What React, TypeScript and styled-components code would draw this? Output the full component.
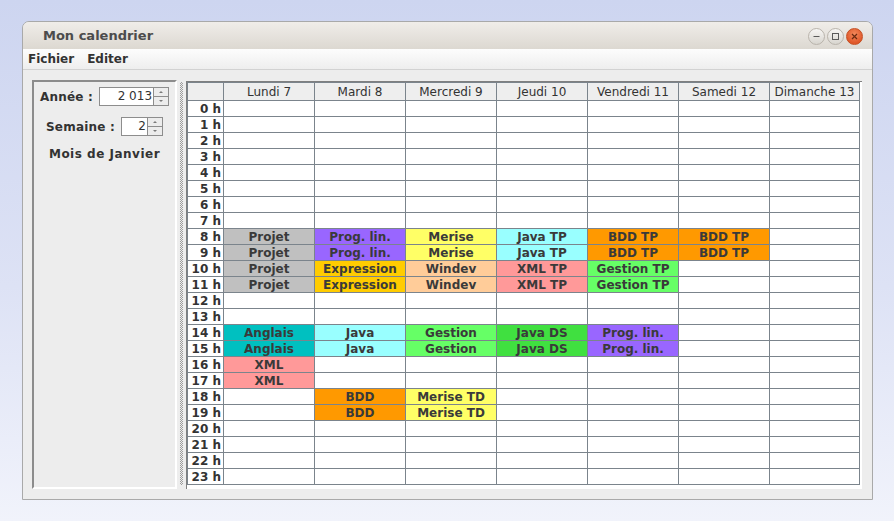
import React from "react";
import styled, { createGlobalStyle } from "styled-components";

const GlobalStyle = createGlobalStyle`
  html, body {
    margin: 0;
    padding: 0;
  }
  body {
    font-family: "DejaVu Sans", "Liberation Sans", sans-serif;
    color: #333;
  }
  * {
    box-sizing: border-box;
  }
`;

const Desktop = styled.div`
  min-height: 521px;
  padding: 21px 0 0 22px;
  background: linear-gradient(to bottom, #cdd5f0 0%, #dde2f5 55%, #f1f3fb 100%);
`;

const Window = styled.div`
  width: 851px;
  height: 479px;
  display: flex;
  flex-direction: column;
  border: 1px solid #a9a9a9;
  border-radius: 7px 7px 0 0;
  background: #ededed;
  overflow: hidden;
`;

const TitleBar = styled.div`
  height: 27px;
  display: flex;
  align-items: center;
  padding: 0 9px 0 20px;
  background: linear-gradient(to bottom, #f0ede9, #dcd8d1);
`;

const Title = styled.div`
  font-weight: bold;
  font-size: 13px;
  color: #4c4c4c;
  margin-top: -1px;
`;

const Controls = styled.div`
  margin-left: auto;
  display: flex;
  gap: 2px;
  padding-top: 1px;
`;

const ControlButton = styled.div<{ $close?: boolean }>`
  width: 17px;
  height: 17px;
  border-radius: 50%;
  display: flex;
  align-items: center;
  justify-content: center;
  border: 1px solid ${(p) => (p.$close ? "#c44f22" : "#b8b3ab")};
  background: ${(p) =>
    p.$close
      ? "radial-gradient(circle at 50% 35%, #f38a5c, #e0582a 70%)"
      : "linear-gradient(to bottom, #f7f6f4, #d8d5cf)"};
`;

const MenuBar = styled.div`
  height: 21px;
  display: flex;
  align-items: center;
  gap: 13px;
  padding: 0 0 0 5px;
  background: linear-gradient(to bottom, #fdfdfd, #eeeeee);
  border-bottom: 1px solid #d2d2d2;
`;

const MenuItem = styled.div`
  font-weight: bold;
  font-size: 12px;
  color: #333;
`;

const Body = styled.div`
  flex: 1;
  display: flex;
  padding: 10px 10px 10px 9px;
  min-height: 0;
`;

const SidePanel = styled.div`
  width: 145px;
  display: flex;
  flex-direction: column;
  align-items: center;
  padding-top: 5px;
  border-top: 2px solid #8c8c8c;
  border-left: 2px solid #8c8c8c;
  border-right: 2px solid #ffffff;
  border-bottom: 2px solid #ffffff;
  background: #ededed;
`;

const FieldRow = styled.div<{ $gap?: number }>`
  display: flex;
  align-items: center;
  gap: 6px;
  margin-bottom: ${(p) => p.$gap ?? 0}px;
`;

const Label = styled.div`
  font-weight: bold;
  font-size: 12px;
  letter-spacing: 0.2px;
  color: #333;
`;

const MonthLabel = styled(Label)`
  letter-spacing: 0.5px;
  line-height: 15px;
  margin-top: 1px;
`;

const SpinBox = styled.div`
  display: flex;
  height: 19px;
`;

const SpinField = styled.div<{ $width: number }>`
  width: ${(p) => p.$width}px;
  height: 19px;
  background: #fff;
  border: 1px solid #8d8d8d;
  border-right: none;
  font-size: 12px;
  line-height: 17px;
  text-align: right;
  padding-right: 1px;
  color: #333;
`;

const SpinButtons = styled.div`
  width: 16px;
  display: flex;
  flex-direction: column;
  border: 1px solid #8d8d8d;
`;

const SpinButton = styled.div<{ $top?: boolean }>`
  flex: 1;
  display: flex;
  align-items: center;
  justify-content: center;
  background: #ececec;
  border-bottom: ${(p) => (p.$top ? "1px solid #8d8d8d" : "none")};
`;

const Arrow = styled.div<{ $up?: boolean }>`
  width: 0;
  height: 0;
  border-left: 2px solid transparent;
  border-right: 2px solid transparent;
  ${(p) => (p.$up ? "border-bottom" : "border-top")}: 2px solid #7a7a7a;
`;

const Splitter = styled.div`
  width: 9px;
  display: flex;
  justify-content: center;
  padding: 2px 0 4px;
`;

const Dots = styled.div`
  width: 3px;
  height: 100%;
  background: repeating-conic-gradient(#9d9d9d 0 25%, transparent 0 50%) 0 0 / 2px 2px;
`;

const ScrollPane = styled.div`
  flex: 1;
  margin-top: 1px;
  background: #fff;
  border-top: 1px solid #7f7f7f;
  border-left: 1px solid #7f7f7f;
`;

const Grid = styled.div`
  display: inline-grid;
  grid-template-columns: 35px repeat(6, 90px) 89px;
  grid-template-rows: 17px repeat(24, 15px);
  gap: 1px;
  padding: 1px;
  background: #7b848c;
`;

const HeadCell = styled.div`
  background: #eeeeee;
  font-size: 12px;
  line-height: 17px;
  padding-top: 1px;
  text-align: center;
  color: #333;
  white-space: nowrap;
  overflow: hidden;
`;

const HourCell = styled.div`
  background: #fff;
  font-weight: bold;
  font-size: 12px;
  line-height: 15px;
  padding-top: 1px;
  text-align: right;
  padding-right: 2px;
  color: #333;
`;

const Cell = styled.div<{ $bg?: string }>`
  background: ${(p) => p.$bg ?? "#fff"};
  font-weight: bold;
  font-size: 12px;
  line-height: 15px;
  padding-top: 1px;
  text-align: center;
  color: #3a3a3a;
  white-space: nowrap;
  overflow: hidden;
`;

const C = {
  gray: "#c0c0c0",
  purple: "#9966ff",
  yellow: "#ffff66",
  cyan: "#99ffff",
  orange: "#ff9900",
  gold: "#ffcc00",
  peach: "#ffcc99",
  pink: "#ff9999",
  green: "#66ff66",
  teal: "#00c0c0",
  bright: "#40e040",
};

const days = ["Lundi 7", "Mardi 8", "Mercredi 9", "Jeudi 10", "Vendredi 11", "Samedi 12", "Dimanche 13"];

type Slot = [string, string];

// cours par jour : heure -> [libellé, couleur]
const plan: Record<number, Record<number, Slot>> = {
  0: {
    8: ["Projet", C.gray], 9: ["Projet", C.gray], 10: ["Projet", C.gray], 11: ["Projet", C.gray],
    14: ["Anglais", C.teal], 15: ["Anglais", C.teal], 16: ["XML", C.pink], 17: ["XML", C.pink],
  },
  1: {
    8: ["Prog. lin.", C.purple], 9: ["Prog. lin.", C.purple], 10: ["Expression", C.gold], 11: ["Expression", C.gold],
    14: ["Java", C.cyan], 15: ["Java", C.cyan], 18: ["BDD", C.orange], 19: ["BDD", C.orange],
  },
  2: {
    8: ["Merise", C.yellow], 9: ["Merise", C.yellow], 10: ["Windev", C.peach], 11: ["Windev", C.peach],
    14: ["Gestion", C.green], 15: ["Gestion", C.green], 18: ["Merise TD", C.yellow], 19: ["Merise TD", C.yellow],
  },
  3: {
    8: ["Java TP", C.cyan], 9: ["Java TP", C.cyan], 10: ["XML TP", C.pink], 11: ["XML TP", C.pink],
    14: ["Java DS", C.bright], 15: ["Java DS", C.bright],
  },
  4: {
    8: ["BDD TP", C.orange], 9: ["BDD TP", C.orange], 10: ["Gestion TP", C.green], 11: ["Gestion TP", C.green],
    14: ["Prog. lin.", C.purple], 15: ["Prog. lin.", C.purple],
  },
  5: { 8: ["BDD TP", C.orange], 9: ["BDD TP", C.orange] },
  6: {},
};

const hours = Array.from({ length: 24 }, (_, i) => i);

const Spinner: React.FC<{ value: string; width: number }> = ({ value, width }) => (
  <SpinBox>
    <SpinField $width={width}>{value}</SpinField>
    <SpinButtons>
      <SpinButton $top>
        <Arrow $up />
      </SpinButton>
      <SpinButton>
        <Arrow />
      </SpinButton>
    </SpinButtons>
  </SpinBox>
);

const App: React.FC = () => {
  return (
    <>
      <GlobalStyle />
      <Desktop>
        <Window>
          <TitleBar>
            <Title>Mon calendrier</Title>
            <Controls>
              <ControlButton>
                <svg width="9" height="9" viewBox="0 0 9 9">
                  <line x1="1.5" y1="4.5" x2="7.5" y2="4.5" stroke="#5a5a5a" strokeWidth="1" />
                </svg>
              </ControlButton>
              <ControlButton>
                <svg width="9" height="9" viewBox="0 0 9 9">
                  <rect x="1.5" y="1.5" width="6" height="6" fill="none" stroke="#5a5a5a" strokeWidth="1" />
                </svg>
              </ControlButton>
              <ControlButton $close>
                <svg width="9" height="9" viewBox="0 0 9 9">
                  <path d="M2 2 L7 7 M7 2 L2 7" stroke="#6b2a10" strokeWidth="1.2" />
                </svg>
              </ControlButton>
            </Controls>
          </TitleBar>
          <MenuBar>
            <MenuItem>Fichier</MenuItem>
            <MenuItem>Editer</MenuItem>
          </MenuBar>
          <Body>
            <SidePanel>
              <FieldRow $gap={11}>
                <Label>Année :</Label>
                <Spinner value="2 013" width={54} />
              </FieldRow>
              <FieldRow $gap={10}>
                <Label>Semaine :</Label>
                <Spinner value="2" width={26} />
              </FieldRow>
              <MonthLabel>Mois de Janvier</MonthLabel>
            </SidePanel>
            <Splitter>
              <Dots />
            </Splitter>
            <ScrollPane>
              <Grid>
                <HeadCell />
                {days.map((d) => (
                  <HeadCell key={d}>{d}</HeadCell>
                ))}
                {hours.map((h) => (
                  <React.Fragment key={h}>
                    <HourCell>{h} h</HourCell>
                    {days.map((d, i) => {
                      const slot = plan[i][h];
                      return (
                        <Cell key={d} $bg={slot?.[1]}>
                          {slot?.[0]}
                        </Cell>
                      );
                    })}
                  </React.Fragment>
                ))}
              </Grid>
            </ScrollPane>
          </Body>
        </Window>
      </Desktop>
    </>
  );
};

export default App;
